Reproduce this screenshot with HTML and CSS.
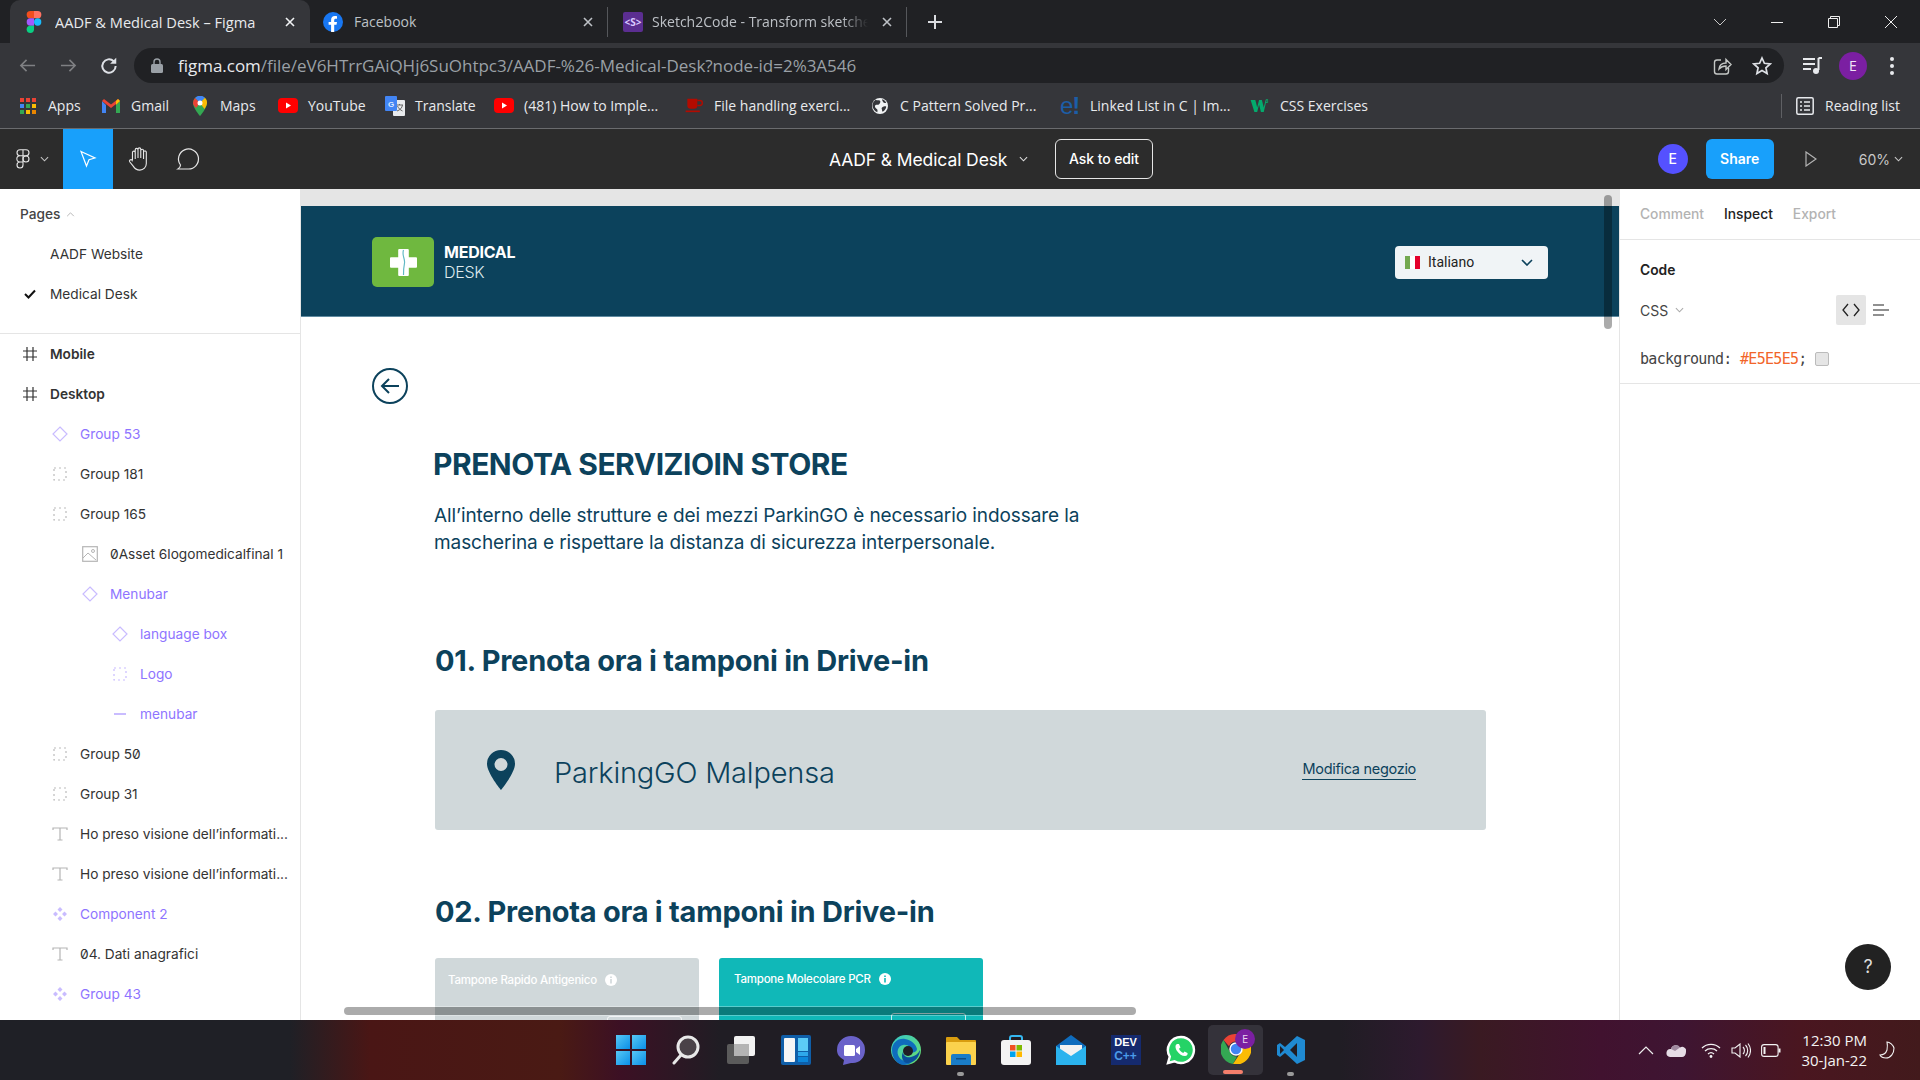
FILE: index.html
```html
<!DOCTYPE html>
<html lang="en">
<head>
<meta charset="utf-8">
<title>AADF &amp; Medical Desk – Figma</title>
<link rel="stylesheet" href="styles.css">
</head>
<body>
<svg class="defs" width="0" height="0">
  <symbol id="i-frame" viewBox="0 0 16 16"><path d="M5 1v14M11 1v14M1 5h14M1 11h14" fill="none" stroke="#333" stroke-width="1.2"/></symbol>
  <symbol id="i-diamond" viewBox="0 0 16 16"><path d="M8 1l7 7-7 7-7-7z" fill="none" stroke="#c9bcff" stroke-width="1.2"/></symbol>
  <symbol id="i-group" viewBox="0 0 14 14"><path d="M1 1h12v12H1z" fill="none" stroke="#bbb" stroke-width="1.2" stroke-dasharray="2 3"/></symbol>
  <symbol id="i-group-p" viewBox="0 0 14 14"><path d="M1 1h12v12H1z" fill="none" stroke="#c9bcff" stroke-width="1.2" stroke-dasharray="2 3"/></symbol>
  <symbol id="i-text" viewBox="0 0 16 14"><path d="M1 3V1h14v2M8 1v12M5.5 13h5" fill="none" stroke="#b5b5b5" stroke-width="1.2"/></symbol>
  <symbol id="i-comp" viewBox="0 0 16 16"><path d="M8 1l2.5 2.5L8 6 5.500 3.500zM8 10l2.500 2.500L8 15l-2.500-2.500zM3.500 5.500L6 8l-2.500 2.500L1 8zM12.500 5.500L15 8l-2.500 2.500L10 8z" fill="#c9bcff"/></symbol>
  <symbol id="i-chev" viewBox="0 0 10 6"><path d="M1 1l4 4 4-4" fill="none" stroke="currentColor" stroke-width="1.2"/></symbol>
  <symbol id="i-yt" viewBox="0 0 20 15"><rect width="20" height="15" rx="4" fill="#f00"/><path d="M8 4.500l5 3-5 3z" fill="#fff"/></symbol>
  <symbol id="i-close" viewBox="0 0 10 10"><path d="M1 1l8 8M9 1L1 9" fill="none" stroke="currentColor" stroke-width="1.6"/></symbol>
  <symbol id="i-info" viewBox="0 0 12 12"><circle cx="6" cy="6" r="6" fill="#fff"/><path d="M5.200 5h1.600v4.500H5.200zM5.200 2.500h1.600v1.500H5.200z" fill="currentColor"/></symbol>
</svg>

<header class="tabbar">
  <div class="tab tab-active">
    <svg class="tab-ico" viewBox="0 0 12 18"><path d="M6 0H3a3 3 0 000 6h3z" fill="#f24e1e"/><path d="M6 0h3a3 3 0 010 6H6z" fill="#ff7262"/><path d="M6 6H3a3 3 0 000 6h3z" fill="#a259ff"/><circle cx="9" cy="9" r="3" fill="#1abcfe"/><path d="M3 12h3v3a3 3 0 11-3-3z" fill="#0acf83"/></svg>
    <span class="tab-title tab-title-on">AADF &amp; Medical Desk – Figma</span>
    <svg class="tab-x tab-x-on"><use href="#i-close"/></svg>
  </div>
  <div class="tab tab-fb">
    <svg class="tab-ico" viewBox="0 0 20 20"><circle cx="10" cy="10" r="10" fill="#1877f2"/><path d="M13.500 12.800l.5-2.800h-2.800V8.200c0-.8.400-1.500 1.600-1.500H14V4.300s-1.100-.2-2.200-.2c-2.300 0-3.700 1.400-3.700 3.800V10H5.600v2.800h2.500V20h3.100v-7.200z" fill="#fff"/></svg>
    <span class="tab-title">Facebook</span>
    <svg class="tab-x"><use href="#i-close"/></svg>
  </div>
  <div class="tab tab-s2c">
    <div class="s2c-ico">&lt;S&gt;</div>
    <span class="tab-title tab-fade">Sketch2Code - Transform sketches</span>
    <svg class="tab-x"><use href="#i-close"/></svg>
  </div>
  <svg class="new-tab" viewBox="0 0 14 14"><path d="M7 0v14M0 7h14" stroke="#dadce0" stroke-width="2"/></svg>
  <div class="win-ctrls">
    <svg class="win-chev" viewBox="0 0 14 8"><path d="M1 1l6 6 6-6" fill="none" stroke="#c8c8c8"/></svg>
    <svg class="win-btn" viewBox="0 0 14 14"><path d="M1 7.500h12" stroke="#eee"/></svg>
    <svg class="win-btn" viewBox="0 0 14 14"><path d="M1.500 3.500h9v9h-9zM3.500 3.500v-2h9v9h-2" fill="none" stroke="#eee"/></svg>
    <svg class="win-btn" viewBox="0 0 14 14"><path d="M1 1l12 12M13 1L1 13" stroke="#eee"/></svg>
  </div>
</header>

<nav class="toolbar">
  <svg class="nav-ico" viewBox="0 0 18 16"><path d="M17 8H2M8 2L2 8l6 6" fill="none" stroke="#7f8083" stroke-width="1.700"/></svg>
  <svg class="nav-ico" viewBox="0 0 18 16"><path d="M1 8h15M10 2l6 6-6 6" fill="none" stroke="#7f8083" stroke-width="1.700"/></svg>
  <svg class="nav-ico nav-reload" viewBox="0 0 18 18"><path d="M15 9a6 6 0 11-1.800-4.300" fill="none" stroke="#dee1e6" stroke-width="1.800"/><path d="M15.500 1.500v5.500H10z" fill="#dee1e6"/></svg>
  <div class="omnibox">
    <svg class="lock" viewBox="0 0 12 15"><path d="M3 6V4a3 3 0 016 0v2" fill="none" stroke="#9aa0a6" stroke-width="1.400"/><rect y="6" width="12" height="9" rx="1.500" fill="#9aa0a6"/></svg>
    <div class="url"><span class="url-host">figma.com</span>/file/eV6HTrrGAiQHj6SuOhtpc3/AADF-%26-Medical-Desk?node-id=2%3A546</div>
    <svg class="omni-ico" viewBox="0 0 20 20"><path d="M9 4H5a2.500 2.500 0 00-2.500 2.500v9A2.500 2.500 0 005 18h9a2.500 2.500 0 002.500-2.500V12" fill="none" stroke="#c4c7c5" stroke-width="1.400"/><path d="M7 13c.5-4 3-6 7-6V3.500l5 5-5 5V10c-3 0-5 .8-7 3z" fill="none" stroke="#c4c7c5" stroke-width="1.400"/></svg>
    <svg class="omni-ico star" viewBox="0 0 20 20"><path d="M10 2l2.400 5.300 5.800.6-4.300 3.900 1.200 5.700L10 14.600l-5.100 2.900 1.200-5.700L1.800 7.900l5.800-.6z" fill="none" stroke="#dee1e6" stroke-width="1.700"/></svg>
  </div>
  <svg class="media" viewBox="0 0 20 18"><path d="M0 2h12M0 7h12M0 12h8" stroke="#e8eaed" stroke-width="1.800"/><path d="M15.500 1v12" stroke="#e8eaed" stroke-width="2"/><path d="M15.500 1H19" stroke="#e8eaed" stroke-width="2"/><circle cx="13" cy="14" r="3" fill="#e8eaed"/></svg>
  <div class="profile">E</div>
  <svg class="dots" viewBox="0 0 4 18"><circle cx="2" cy="2" r="2" fill="#e8eaed"/><circle cx="2" cy="9" r="2" fill="#e8eaed"/><circle cx="2" cy="16" r="2" fill="#e8eaed"/></svg>
</nav>

<nav class="bookmarks">
  <div class="bm bm-apps">
    <svg class="bm-ico" viewBox="0 0 16 16"><g><rect width="4" height="4" fill="#ea4335"/><rect x="6" width="4" height="4" fill="#ea4335"/><rect x="12" width="4" height="4" fill="#ea4335"/><rect y="6" width="4" height="4" fill="#4285f4"/><rect x="6" y="6" width="4" height="4" fill="#34a853"/><rect x="12" y="6" width="4" height="4" fill="#fbbc05"/><rect y="12" width="4" height="4" fill="#34a853"/><rect x="6" y="12" width="4" height="4" fill="#fbbc05"/><rect x="12" y="12" width="4" height="4" fill="#ea8600"/></g></svg>
    <span>Apps</span>
  </div>
  <div class="bm bm-gmail">
    <svg class="bm-ico-w" viewBox="0 0 18 14"><path d="M0 2v12h4V6z" fill="#4285f4"/><path d="M14 6v8h4V2z" fill="#34a853"/><path d="M0 2l9 7 9-7-2-2-7 5.500L2 0z" fill="#ea4335"/><path d="M14 2l2-2 2 2-4 4z" fill="#fbbc05"/></svg>
    <span>Gmail</span>
  </div>
  <div class="bm bm-maps">
    <svg class="bm-ico-m" viewBox="0 0 14 20"><path d="M7 0a7 7 0 017 7c0 5-7 13-7 13S0 12 0 7a7 7 0 017-7z" fill="#34a853"/><path d="M2 2a7 7 0 0110-.3L7 7z" fill="#4285f4"/><path d="M14 7c0 1.500-1 3.800-2.500 6L7 7l5-5.300A7 7 0 0114 7z" fill="#fbbc05"/><path d="M0 7a7 7 0 012-5l5 5-4 5C1 10 0 8.500 0 7z" fill="#ea4335"/><circle cx="7" cy="7" r="2.500" fill="#fff"/></svg>
    <span>Maps</span>
  </div>
  <div class="bm bm-yt">
    <svg class="bm-ico-y"><use href="#i-yt"/></svg>
    <span>YouTube</span>
  </div>
  <div class="bm bm-tr">
    <svg class="bm-ico-y bm-tall" viewBox="0 0 20 20"><rect x="8" y="4" width="12" height="16" rx="1" fill="#e8eaed"/><path d="M11 9h7M14.500 8v1M12 15c3-1 5-3 5.500-6M12.500 10c1 2.500 3 4 5 5" fill="none" stroke="#666" stroke-width="1"/><rect width="12" height="15" rx="1" fill="#4285f4"/><text x="3" y="11" class="tr-g">G</text></svg>
    <span>Translate</span>
  </div>
  <div class="bm bm-yt2">
    <svg class="bm-ico-y"><use href="#i-yt"/></svg>
    <span>(481) How to Imple...</span>
  </div>
  <div class="bm bm-file">
    <svg class="bm-ico-y" viewBox="0 0 20 18"><path d="M2 1h12v8a4 4 0 01-4 4H6a4 4 0 01-4-4z" fill="#b30b00"/><path d="M14 3h3a2 2 0 010 6h-3" fill="none" stroke="#b30b00" stroke-width="1.600"/><rect y="15" width="17" height="2" fill="#b30b00"/></svg>
    <span>File handling exerci...</span>
  </div>
  <div class="bm bm-globe">
    <svg class="bm-ico" viewBox="0 0 18 18"><circle cx="9" cy="9" r="9" fill="#f1f3f4"/><path d="M4 2c2 1 4 0 5 1s0 3-1 4-3 0-4 1-1 3 1 4 1 3 1 4c-3-1-5-4-5.500-7C.5 6 2 3.500 4 2zM12 10c1-1 3-1 4-.5 0 2-1.500 4.500-4 6-1-1-.5-2-1-3s0-2 1-2.500zM11.500 1.500c2 .5 3.500 2 4.500 4-1 .5-3 0-3.500-1s-1.500-2-1-3z" fill="#35363a"/></svg>
    <span>C Pattern Solved Pr...</span>
  </div>
  <div class="bm bm-e">
    <span class="e-ico">e<span class="e-bang">!</span></span>
    <span>Linked List in C | Im...</span>
  </div>
  <div class="bm bm-w3">
    <svg class="bm-ico-y" viewBox="0 0 20 16"><path d="M0 2h5l2 8 2-8h3l2 8 2-8h1l-3 13h-3L9 7l-2 8H4z" fill="#04aa6d"/><text x="16" y="5" class="w3-s">3</text></svg>
    <span>CSS Exercises</span>
  </div>
  <div class="bm-reading">
    <svg class="bm-read-ico" viewBox="0 0 18 18"><rect x=".8" y=".8" width="16.400" height="16.400" rx="1.500" fill="none" stroke="#e8eaed" stroke-width="1.500"/><path d="M4 5h2M8 5h6M4 9h2M8 9h6M4 13h2M8 13h6" stroke="#e8eaed" stroke-width="1.500"/></svg>
    <span>Reading list</span>
  </div>
</nav>

<div class="figbar">
  <div class="fig-left">
    <div class="fig-logo">
      <svg class="fig-mark" viewBox="0 0 14 20"><path d="M7 .7H4a3 3 0 000 6h3zM7 .7h3a3 3 0 010 6H7zM7 6.700H4a3 3 0 000 6.300h3zM4 13h3v3a3 3 0 11-3-3z" fill="none" stroke="#e6e6e6" stroke-width="1.100"/><circle cx="10" cy="10" r="3" fill="none" stroke="#e6e6e6" stroke-width="1.100"/></svg>
      <svg class="fig-chev"><use href="#i-chev"/></svg>
    </div>
    <div class="tool tool-on">
      <svg class="tool-ico" viewBox="0 0 18 18"><path d="M2 1.500l14 6.500-6 1.800L7.500 16z" fill="none" stroke="#fff" stroke-width="1.200"/></svg>
    </div>
    <div class="tool">
      <svg class="tool-ico tool-big" viewBox="0 0 24 26"><path d="M6 14V6a1.500 1.500 0 013 0V3a1.500 1.500 0 013 0V2.500a1.500 1.500 0 013 0V4a1.500 1.500 0 013 0v2a1.500 1.500 0 013-.5V18c0 4-3 7-7 7-3.500 0-5.500-1.500-7-4l-4-5c-1-1.500 1-3 2.500-2L6 15.500M9 5v8M12 3v9M15 3v9M18 5v8" fill="none" stroke="#e6e6e6" stroke-width="1.200"/></svg>
    </div>
    <div class="tool">
      <svg class="tool-ico tool-big" viewBox="0 0 24 24"><path d="M2 22c1.500-1 2.500-2.500 2.500-4A10 10 0 1112 22z" fill="none" stroke="#e6e6e6" stroke-width="1.200"/></svg>
    </div>
  </div>
  <div class="fig-title">AADF &amp; Medical Desk</div>
  <svg class="fig-title-chev"><use href="#i-chev"/></svg>
  <div class="ask">Ask to edit</div>
  <div class="fig-right">
    <div class="fig-avatar">E</div>
    <div class="share">Share</div>
    <svg class="play" viewBox="0 0 12 16"><path d="M1 1l10 7-10 7z" fill="none" stroke="#b3b3b3" stroke-width="1.200"/></svg>
    <span class="zoom-val">60%</span>
    <svg class="zoom-chev"><use href="#i-chev"/></svg>
  </div>
</div>

<main class="workspace">
  <aside class="layers">
    <div class="pages-head">Pages <svg class="pages-chev" viewBox="0 0 10 6"><path d="M1 5l4-4 4 4" fill="none" stroke="#aaa"/></svg></div>
    <div class="row d0"><span class="ri"></span><span class="rt">AADF Website</span></div>
    <div class="row d0"><span class="ri"><svg class="ck" viewBox="0 0 12 10"><path d="M1 5l3.500 3.500L11 1.500" fill="none" stroke="#111" stroke-width="2"/></svg></span><span class="rt">Medical Desk</span></div>
    <div class="divider"></div>
    <div class="row d0 bold"><span class="ri"><svg class="li16"><use href="#i-frame"/></svg></span><span class="rt">Mobile</span></div>
    <div class="row d0 bold"><span class="ri"><svg class="li16"><use href="#i-frame"/></svg></span><span class="rt">Desktop</span></div>
    <div class="row d1 pur"><span class="ri"><svg class="li16"><use href="#i-diamond"/></svg></span><span class="rt">Group 53</span></div>
    <div class="row d1"><span class="ri"><svg class="li14"><use href="#i-group"/></svg></span><span class="rt">Group 181</span></div>
    <div class="row d1"><span class="ri"><svg class="li14"><use href="#i-group"/></svg></span><span class="rt">Group 165</span></div>
    <div class="row d2"><span class="ri"><svg class="li16" viewBox="0 0 16 16"><rect x=".7" y=".7" width="14.600" height="14.600" fill="none" stroke="#b5b5b5" stroke-width="1.200"/><path d="M1 12l5-5 8 7" fill="none" stroke="#b5b5b5"/><circle cx="11" cy="5" r="1.500" fill="none" stroke="#b5b5b5"/></svg></span><span class="rt">0Asset 6logomedicalfinal 1</span></div>
    <div class="row d2 pur"><span class="ri"><svg class="li16"><use href="#i-diamond"/></svg></span><span class="rt">Menubar</span></div>
    <div class="row d3 pur"><span class="ri"><svg class="li16"><use href="#i-diamond"/></svg></span><span class="rt">language box</span></div>
    <div class="row d3 pur"><span class="ri"><svg class="li14"><use href="#i-group-p"/></svg></span><span class="rt">Logo</span></div>
    <div class="row d3 pur"><span class="ri"><span class="dash"></span></span><span class="rt">menubar</span></div>
    <div class="row d1"><span class="ri"><svg class="li14"><use href="#i-group"/></svg></span><span class="rt">Group 50</span></div>
    <div class="row d1"><span class="ri"><svg class="li14"><use href="#i-group"/></svg></span><span class="rt">Group 31</span></div>
    <div class="row d1"><span class="ri"><svg class="li16"><use href="#i-text"/></svg></span><span class="rt">Ho preso visione dell’informati...</span></div>
    <div class="row d1"><span class="ri"><svg class="li16"><use href="#i-text"/></svg></span><span class="rt">Ho preso visione dell’informati...</span></div>
    <div class="row d1 pur"><span class="ri"><svg class="li16"><use href="#i-comp"/></svg></span><span class="rt">Component 2</span></div>
    <div class="row d1"><span class="ri"><svg class="li16"><use href="#i-text"/></svg></span><span class="rt">04. Dati anagrafici</span></div>
    <div class="row d1 pur"><span class="ri"><svg class="li16"><use href="#i-comp"/></svg></span><span class="rt">Group 43</span></div>
  </aside>

  <section class="canvas">
    <div class="site-head">
      <div class="brand">
        <div class="brand-mark">
          <svg class="brand-cross" viewBox="0 0 28 28"><path d="M9.500 1h9v8.500H27v9h-8.500V27h-9v-8.500H1v-9h8.500z" fill="#fff" stroke="#fff" stroke-linejoin="round" stroke-width="2"/><path d="M14 1c-2 6 2 9 1 14s-1 8-1 12" fill="none" stroke="#5fb8c4" stroke-width="1.200"/></svg>
        </div>
        <div class="brand-text"><div class="brand-top">MEDICAL</div><div class="brand-sub">DESK</div></div>
      </div>
      <div class="lang">
        <svg class="flag" viewBox="0 0 15 13"><rect width="5" height="13" fill="#73a950"/><rect x="5" width="5" height="13" fill="#fff"/><rect x="10" width="5" height="13" fill="#e4002b"/></svg>
        <span class="lang-name">Italiano</span>
        <svg class="lang-chev" viewBox="0 0 12 7"><path d="M1 1l5 5 5-5" fill="none" stroke="#0c425c" stroke-width="1.600"/></svg>
      </div>
    </div>
    <svg class="back" viewBox="0 0 36 36"><circle cx="18" cy="18" r="17" fill="none" stroke="#0c425c" stroke-width="2"/><path d="M27 18H10M17 11l-7 7 7 7" fill="none" stroke="#0c425c" stroke-width="2"/></svg>
    <h1 class="title">PRENOTA SERVIZIOIN STORE</h1>
    <p class="lead">All’interno delle strutture e dei mezzi ParkinGO è necessario indossare la<br>mascherina e rispettare la distanza di sicurezza interpersonale.</p>
    <h2 class="step step-one">01. Prenota ora i tamponi in Drive-in</h2>
    <div class="store">
      <svg class="pin" viewBox="0 0 28 40"><path fill-rule="evenodd" d="M14 0a14 14 0 0114 14c0 9-14 26-14 26S0 23 0 14A14 14 0 0114 0zm0 8a6.500 6.500 0 100 13 6.500 6.500 0 000-13z" fill="#0c425c"/></svg>
      <div class="store-name">ParkingGO Malpensa</div>
      <a class="store-edit">Modifica negozio</a>
    </div>
    <h2 class="step step-two">02. Prenota ora i tamponi in Drive-in</h2>
    <div class="tiles">
      <div class="tile tile-off">
        <div class="tile-head"><span>Tampone Rapido Antigenico</span><svg class="info info-off"><use href="#i-info"/></svg></div>
        <div class="tile-btn"></div>
      </div>
      <div class="tile tile-on">
        <div class="tile-head"><span>Tampone Molecolare PCR</span><svg class="info info-on"><use href="#i-info"/></svg></div>
        <div class="tile-btn"></div>
      </div>
    </div>
    <div class="vbar"></div>
    <div class="hbar"></div>
  </section>

  <aside class="inspect">
    <div class="ins-tabs"><span class="ins-tab">Comment</span><span class="ins-tab ins-on">Inspect</span><span class="ins-tab">Export</span></div>
    <div class="ins-code">
      <div class="ins-h">Code</div>
      <div class="ins-lang">
        <span>CSS</span>
        <svg class="ins-chev"><use href="#i-chev"/></svg>
        <div class="ins-tool"><svg class="ins-tool-ico" viewBox="0 0 18 14"><path d="M6 1L1 7l5 6M12 1l5 6-5 6" fill="none" stroke="#222" stroke-width="1.300"/></svg></div>
        <svg class="ins-lines" viewBox="0 0 16 12"><path d="M0 1h11M0 6h16M0 11h11" stroke="#222" stroke-width="1.200"/></svg>
      </div>
      <div class="ins-css">background: <span class="ins-hex">#E5E5E5</span>;<span class="swatch"></span></div>
    </div>
    <div class="help">?</div>
  </aside>
</main>

<footer class="taskbar">
  <div class="dock">
    <div class="app"><svg class="app-ico" viewBox="0 0 30 30"><defs><linearGradient id="wn" x1="0" y1="0" x2="1" y2="1"><stop offset="0" stop-color="#57c8f5"/><stop offset="1" stop-color="#0a8fe8"/></linearGradient></defs><rect width="14" height="14" fill="url(#wn)"/><rect x="16" width="14" height="14" fill="url(#wn)"/><rect y="16" width="14" height="14" fill="url(#wn)"/><rect x="16" y="16" width="14" height="14" fill="url(#wn)"/></svg></div>
    <div class="app"><svg class="app-ico" viewBox="0 0 30 30"><circle cx="17" cy="12" r="10" fill="#4a4248" stroke="#e8e8e8" stroke-width="3"/><path d="M10 20l-7 8" stroke="#e8e8e8" stroke-width="3" stroke-linecap="round"/></svg></div>
    <div class="app"><svg class="app-ico" viewBox="0 0 30 30"><rect x="1" y="9" width="22" height="20" rx="2" fill="#5b5b5b"/><rect x="8" y="1" width="21" height="20" rx="2" fill="#f2f2f2"/><rect x="8" y="9" width="15" height="12" fill="#b4b4b4"/></svg></div>
    <div class="app"><svg class="app-ico" viewBox="0 0 30 30"><rect width="30" height="30" rx="2" fill="#0f5ea8"/><rect x="3" y="3" width="11" height="24" rx="1" fill="#f5f5f5"/><rect x="17" y="3" width="10" height="13" fill="#5ccbf7"/><rect x="17" y="17" width="10" height="4" fill="#2ea8ec"/><rect x="17" y="22" width="10" height="5" fill="#0c86da"/></svg></div>
    <div class="app"><svg class="app-ico" viewBox="0 0 30 30"><path d="M15 1a14 14 0 0114 14c0 8-6 14-14 13l-8 2 1-5C3 22 1 19 1 15A14 14 0 0115 1z" fill="#6a62c9"/><rect x="8" y="10" width="11" height="11" rx="1.500" fill="#fff"/><path d="M20 14l4-3v9l-4-3z" fill="#fff"/></svg></div>
    <div class="app"><svg class="app-ico" viewBox="0 0 30 30"><defs><linearGradient id="edg" x1="0" y1="0" x2="1" y2="1"><stop offset="0" stop-color="#37c7c9"/><stop offset="1" stop-color="#6be06a"/></linearGradient></defs><circle cx="15" cy="15" r="15" fill="url(#edg)"/><path d="M1 15C1 8 7 3 14 4c6 1 11 5 12 10 0 3-4 4-7 3 2-4-2-8-7-7-5 1-7 7-4 12 2 3 7 6 13 5-2 2-5 3-8 3C6 30 1 23 1 15z" fill="#0f6cbd"/><circle cx="17" cy="16" r="5" fill="#201d24"/><path d="M12 17c0 4 4 6 8 5s7-3 9-7c0 5-4 13-13 13-3 0-7-5-4-11z" fill="#0a4f9a"/></svg></div>
    <div class="app app-dot"><svg class="app-ico" viewBox="0 0 30 30"><path d="M0 3a1 1 0 011-1h10l3 3h15a1 1 0 011 1v5H0z" fill="#d99d0f"/><rect y="7" width="30" height="23" rx="1" fill="#fbd24d"/><path d="M5 30V21a2 2 0 012-2h16a2 2 0 012 2v9z" fill="#1a7dc8"/><rect x="10" y="23" width="10" height="1.500" fill="#0e4f85"/></svg></div>
    <div class="app"><svg class="app-ico" viewBox="0 0 30 30"><path d="M9 6V3a2 2 0 012-2h8a2 2 0 012 2v3" fill="none" stroke="#35b7f0" stroke-width="2"/><rect y="5" width="30" height="25" rx="3" fill="#f3f3f3"/><rect x="9" y="10" width="5.500" height="5.500" fill="#f25022"/><rect x="15.500" y="10" width="5.500" height="5.500" fill="#7fba00"/><rect x="9" y="16.500" width="5.500" height="5.500" fill="#00a4ef"/><rect x="15.500" y="16.500" width="5.500" height="5.500" fill="#ffb900"/></svg></div>
    <div class="app"><svg class="app-ico" viewBox="0 0 30 30"><path d="M15 0l15 11v18H0V11z" fill="#0f6cbd"/><path d="M4 10h22v5L15 22 4 15z" fill="#f2f2f2"/><path d="M0 11l15 10 15-10v19H0z" fill="#2bb3ee"/></svg></div>
    <div class="app"><div class="dev"><span class="dev-a">DEV</span><span class="dev-b">C++</span></div></div>
    <div class="app"><svg class="app-ico" viewBox="0 0 30 30"><path d="M15 2a13 13 0 11-6.500 24.300L2 28l1.800-6.300A13 13 0 0115 2z" fill="#25d366" stroke="#fff" stroke-width="2.400"/><path d="M11 9c-2 1-2 4 0 7s5 5 8 5c2 0 3-2 2.500-3l-3-1.500-1.200 1.500c-2-.8-3.500-2.300-4.300-4.300l1.500-1.200L13 9z" fill="#fff"/></svg></div>
    <div class="app app-on"><svg class="app-ico chrome" viewBox="0 0 30 30"><path d="M15 0a15 15 0 0113 7.500H15a7.500 7.500 0 00-7 4.700L2.500 6A15 15 0 0115 0z" fill="#ea4335"/><path d="M2.500 6L9 18a7.500 7.500 0 007 4.500L12 30A15 15 0 012.500 6z" fill="#34a853"/><path d="M28 7.500A15 15 0 0112 30l6-9a7.500 7.500 0 00-3-13.500z" fill="#fbbc05"/><circle cx="15" cy="15" r="6" fill="#4285f4" stroke="#fff" stroke-width="1.500"/></svg><div class="chrome-badge">E</div><div class="on-bar"></div></div>
    <div class="app app-dot"><svg class="app-ico" viewBox="0 0 30 30"><path d="M21 1l8 4v20l-8 4L9 18l-5 4-3-2V10l3-2 5 4z" fill="#1f8ad2"/><path d="M21 8l-7 7 7 7z" fill="#201d24"/><path d="M4 11v8l4-4z" fill="#201d24"/></svg></div>
  </div>
  <div class="tray">
    <svg class="tray-chev" viewBox="0 0 16 9"><path d="M1 8l7-7 7 7" fill="none" stroke="#eee" stroke-width="1.200"/></svg>
    <svg class="tray-cloud" viewBox="0 0 20 13"><path d="M5 5a5 5 0 019-1.500A4 4 0 0120 8c0 3-2 5-4 5H4a4 4 0 011-8z" fill="#e6dde6"/><path d="M5 5a5 5 0 019-1.500L9 7z" fill="#a08aa0"/></svg>
    <svg class="tray-wifi" viewBox="0 0 20 15"><path d="M1 5a13 13 0 0118 0M4 8a9 9 0 0112 0M7 11a4.500 4.500 0 016 0" fill="none" stroke="#f3f3f3" stroke-width="1.300"/><circle cx="10" cy="13.500" r="1.400" fill="#f3f3f3"/></svg>
    <svg class="tray-vol" viewBox="0 0 20 15"><path d="M1 5h3l5-4v13l-5-4H1z" fill="none" stroke="#f3f3f3" stroke-width="1.100"/><path d="M12 4a5 5 0 010 7M14.500 2a8 8 0 010 11M17 .5a11 11 0 010 14" fill="none" stroke="#f3f3f3" stroke-width="1.100"/></svg>
    <svg class="tray-bat" viewBox="0 0 20 13"><rect x=".6" y=".6" width="16.500" height="11.800" rx="2.500" fill="none" stroke="#f3f3f3" stroke-width="1.100"/><rect x="2.500" y="3" width="2" height="7" fill="#f3f3f3"/><rect x="17.500" y="4.500" width="2" height="4" fill="#f3f3f3"/></svg>
    <div class="clock"><div>12:30 PM</div><div>30-Jan-22</div></div>
    <svg class="tray-moon" viewBox="0 0 16 18"><path d="M8 1c3 0 6 3 7 6 0 5-3 10-8 10-3 0-5-1-6-3 3 0 6-2 7-5 .5-3 .5-6 0-8z" fill="none" stroke="#f3f3f3" stroke-width="1.100"/></svg>
  </div>
</footer>
</body>
</html>
```
FILE: styles.css
```css
* { box-sizing: border-box; }
html, body { margin: 0; padding: 0; }
body {
  width: 1920px;
  height: 1080px;
  overflow: hidden;
  display: flex;
  flex-direction: column;
  font-family: "Open Sans", "Liberation Sans", sans-serif;
  background: #202124;
}
.defs { position: absolute; }
svg { display: block; flex: none; }

/* browser tab strip */
.tabbar { height: 43px; background: #202124; display: flex; align-items: center; color: #bdc1c6; font-size: 14px; flex: none; }
.tab { height: 43px; display: flex; align-items: center; flex: none; }
.tab-active { width: 300px; margin-left: 10px; background: #35363a; border-radius: 10px 10px 0 0; padding: 0 0 0 14px; }
.tab-ico { width: 20px; height: 22px; margin-right: 11px; }
.tab-title { flex: 1; white-space: nowrap; overflow: hidden; }
.tab-title-on { color: #e8eaed; font-size: 14.600px; }
.tab-x { width: 10px; height: 10px; color: #bdc1c6; margin-right: 14px; }
.tab-x-on { color: #f1f3f4; margin-right: 15px; }
.tab-fb { width: 298px; padding-left: 13px; border-right: 1px solid #55575b; height: 30px; }
.tab-s2c { width: 299px; padding-left: 15px; border-right: 1px solid #55575b; height: 30px; }
.tab-s2c .tab-x { margin-left: 14px; }
.s2c-ico { width: 20px; height: 20px; margin-right: 9px; background: #5b2e91; color: #d9c8ff; border-radius: 2px; font-size: 10px; font-weight: 700; text-align: center; line-height: 20px; flex: none; }
.tab-fade { color: #bdc1c6; -webkit-mask-image: linear-gradient(90deg, #000 88%, transparent); mask-image: linear-gradient(90deg, #000 88%, transparent); }
.new-tab { width: 14px; height: 14px; margin-left: 21px; }
.win-ctrls { margin-left: auto; display: flex; align-items: center; padding-right: 22px; }
.win-chev { width: 14px; height: 8px; margin-right: 43px; }
.win-btn { width: 14px; height: 14px; margin-right: 43px; }
.win-btn:last-child { margin-right: 0; }

/* browser toolbar */
.toolbar { height: 40px; background: #35363a; display: flex; align-items: center; flex: none; padding-left: 19px; }
.nav-ico { width: 17px; height: 17px; margin-right: 24px; }
.nav-reload { width: 20px; height: 20px; margin-left: -2px; margin-right: 23px; }
.omnibox { width: 1650px; height: 35px; margin: 5px 0 0 -8px; background: #202124; border-radius: 18px; display: flex; align-items: center; padding-left: 17px; }
.toolbar > svg { margin-top: 5px; }
.lock { width: 12px; height: 15px; margin-right: 15px; }
.url { color: #9aa0a6; font-size: 17px; letter-spacing: -.02px; white-space: nowrap; width: 1534px; flex: none; }
.url-host { color: #e8eaed; }
.omni-ico { width: 20px; height: 20px; }
.omni-ico.star { margin-left: 20px; }
.toolbar > .media { width: 20px; height: 18px; margin-left: 19px; }
.profile { width: 28px; height: 28px; margin: 5px 0 0 16px; border-radius: 50%; background: #7b1fa2; color: #f1e5f7; font-size: 14px; text-align: center; line-height: 28px; }
.toolbar > .dots { width: 4px; height: 18px; margin-left: 23px; }

/* bookmarks */
.bookmarks { height: 46px; background: #35363a; border-bottom: 1px solid #6a6b6e; display: flex; align-items: center; color: #e8eaed; font-size: 14px; flex: none; padding-left: 20px; }
.bm { display: flex; align-items: center; flex: none; white-space: nowrap; }
.bm-ico { width: 16px; height: 16px; margin-right: 12px; }
.bm-ico-w { width: 18px; height: 14px; margin-right: 11px; }
.bm-ico-m { width: 14px; height: 20px; margin-right: 13px; }
.bm-ico-y { width: 20px; height: 15px; margin-right: 10px; }
.bm-tall { height: 20px; }
.tr-g { font: 700 8px "Liberation Sans", sans-serif; fill: #dce8ff; }
.w3-s { font: 700 5px "Liberation Sans", sans-serif; fill: #04aa6d; }
.e-ico { color: #1c5ea8; font-size: 24px; line-height: 20px; width: 20px; margin-right: 10px; font-family: "Liberation Sans", sans-serif; letter-spacing: -1px; }
.e-bang { font-weight: 700; }
.bm-apps { width: 82px; }
.bm-gmail { width: 91px; }
.bm-maps { width: 85px; }
.bm-yt { width: 107px; }
.bm-tr { width: 109px; }
.bm-yt2 { width: 190px; }
.bm-file { width: 188px; }
.bm-globe { width: 188px; }
.bm-e { width: 190px; }
.bm-w3 { width: 200px; }
.bm-reading { margin-left: auto; width: 139px; height: 24px; border-left: 1px solid #5f6064; display: flex; align-items: center; padding-left: 14px; white-space: nowrap; }
.bm-read-ico { width: 18px; height: 18px; margin-right: 11px; }

/* figma toolbar */
.figbar { height: 60px; background: #2c2c2c; display: flex; align-items: center; color: #fff; flex: none; position: relative; }
.fig-left { display: flex; align-items: stretch; height: 60px; width: 829px; }
.fig-logo { width: 63px; display: flex; align-items: center; padding-left: 16px; }
.fig-mark { width: 14px; height: 20px; }
.fig-chev { width: 9px; height: 6px; color: #c4c4c4; margin-left: 10px; }
.tool { width: 50px; display: flex; align-items: center; justify-content: center; }
.tool-on { background: #18a0fb; }
.tool-ico { width: 18px; height: 18px; }
.tool-big { width: 24px; height: 24px; }
.fig-title { font-family: Inter, sans-serif; font-size: 17.500px; letter-spacing: -.1px; width: 178px; white-space: nowrap; }
.fig-title-chev { width: 9px; height: 6px; color: #ddd; margin-left: 12px; }
.ask { width: 98px; height: 40px; margin-left: 27px; border: 1px solid #e6e6e6; border-radius: 6px; font-family: Inter, sans-serif; font-size: 14px; font-weight: 500; letter-spacing: -.1px; text-align: center; line-height: 38px; }
.fig-right { margin-left: auto; display: flex; align-items: center; padding-right: 17px; }
.fig-avatar { width: 30px; height: 30px; border-radius: 50%; background: #5551ff; font: 500 14px Inter, sans-serif; text-align: center; line-height: 30px; }
.share { width: 68px; height: 40px; margin-left: 18px; border-radius: 6px; background: #18a0fb; font: 600 14px Inter, sans-serif; text-align: center; line-height: 39px; }
.play { width: 12px; height: 16px; margin-left: 31px; }
.zoom-val { margin-left: 42px; font: 400 14px Inter, sans-serif; color: #c8c8c8; }
.zoom-chev { width: 9px; height: 6px; color: #c8c8c8; margin-left: 4px; }

/* workspace */
.workspace { height: 831px; display: flex; flex: none; background: #fff; overflow: hidden; }
.layers { width: 301px; flex: none; border-right: 1px solid #e5e5e5; padding-top: 5px; font-family: Inter, sans-serif; font-size: 13.700px; font-feature-settings: "zero"; color: #333; overflow: hidden; }
.pages-head { height: 40px; padding-left: 20px; display: flex; align-items: center; gap: 6px; font-weight: 500; color: #444; }
.pages-chev { width: 9px; height: 5px; }
.row { height: 40px; display: flex; align-items: center; white-space: nowrap; }
.ri { width: 40px; height: 40px; display: flex; align-items: center; justify-content: center; flex: none; }
.rt { flex: none; }
.d0 { padding-left: 10px; }
.d1 { padding-left: 40px; }
.d2 { padding-left: 70px; }
.d3 { padding-left: 100px; }
.bold { font-weight: 600; }
.pur { color: #8e74ff; }
.ck { width: 12px; height: 10px; }
.li16 { width: 16px; height: 16px; }
.li14 { width: 14px; height: 14px; }
.dash { width: 12px; height: 2px; background: #c9bcff; }
.divider { height: 1px; margin-top: 19px; background: #e5e5e5; }

/* canvas */
.canvas { width: 1318px; flex: none; position: relative; overflow: hidden; background: #fff; color: #0c425c; font-family: Inter, sans-serif; padding-top: 17px; box-shadow: inset 0 17px 0 #e5e5e5; }
.site-head { height: 111px; background: #0c425c; display: flex; align-items: center; justify-content: space-between; padding: 2px 71px 0; border-bottom: 1px solid #5f8aa0; }
.brand { display: flex; align-items: center; }
.brand-mark { width: 62px; height: 50px; background: #6fb83f; border-radius: 5px; display: flex; align-items: center; justify-content: center; }
.brand-cross { width: 27px; height: 27px; }
.brand-text { margin-left: 10px; color: #fff; line-height: 20px; }
.brand-top { font-size: 16px; font-weight: 700; letter-spacing: -.25px; }
.brand-sub { font-size: 16px; font-weight: 300; color: #dfeaee; letter-spacing: -.3px; }
.lang { width: 153px; height: 33px; background: #f0f4f6; border-radius: 4px; display: flex; align-items: center; padding-left: 10px; color: #222; font-family: Roboto, sans-serif; font-size: 14px; }
.flag { width: 15px; height: 13px; margin-right: 8px; }
.lang-chev { width: 12px; height: 7px; margin-left: auto; margin-right: 15px; }
.back { width: 36px; height: 36px; margin: 51px 0 0 71px; }
.title { margin: 40px 0 0 132px; font-size: 30px; line-height: 40px; font-weight: 700; letter-spacing: -.5px; white-space: nowrap; }
.lead { margin: 18px 0 0 133px; font-size: 19px; line-height: 27px; font-weight: 400; letter-spacing: -.08px; white-space: nowrap; }
.step { margin: 0 0 0 134px; font-size: 29px; line-height: 40px; font-weight: 700; letter-spacing: -.25px; white-space: nowrap; }
.step-one { margin-top: 85px; }
.step-two { margin-top: 62px; }
.store { width: 1051px; height: 120px; margin: 29px 0 0 134px; background: #d0d8da; border-radius: 3px; display: flex; align-items: center; padding: 0 70px 0 52px; }
.pin { width: 28px; height: 40px; margin-top: -1px; }
.store-name { margin-left: 39px; font-size: 29px; font-weight: 300; letter-spacing: -.2px; white-space: nowrap; margin-top: 5px; }
.store-edit { margin-left: auto; margin-top: -1px; font-size: 14.500px; letter-spacing: -.3px; padding-bottom: 2px; border-bottom: 1px solid #0c425c; white-space: nowrap; }
.tiles { display: flex; gap: 20px; margin: 26px 0 0 134px; }
.tile { width: 264px; height: 100px; border-radius: 3px; color: #fff; position: relative; font-size: 11.500px; font-weight: 500; letter-spacing: -.22px; }
.tile-off { background: #d0d8da; }
.tile-on { background: #10b8b8; }
.tile-head { display: flex; align-items: center; gap: 8px; height: 44px; padding-left: 13px; white-space: nowrap; }
.tile-on .tile-head { height: 42px; padding-left: 15px; }
.info { width: 12px; height: 12px; }
.info-off { color: #d0d8da; }
.info-on { color: #10b8b8; }
.tile-btn { position: absolute; width: 75px; height: 40px; border: 1px solid rgba(255,255,255,.75); border-radius: 3px; right: 17px; top: 58px; }
.tile-on .tile-btn { top: 55px; }
.vbar { position: absolute; left: 1303px; top: 6px; width: 8px; height: 134px; border-radius: 4px; background: rgba(0,0,0,.33); }
.hbar { position: absolute; left: 43px; top: 818px; width: 792px; height: 8px; border-radius: 4px; background: rgba(0,0,0,.33); box-shadow: 0 0 0 1px rgba(255,255,255,.3); }

/* inspect panel */
.inspect { width: 301px; flex: none; border-left: 1px solid #e5e5e5; font-family: Inter, sans-serif; font-size: 13.800px; position: relative; }
.ins-tabs { height: 51px; display: flex; align-items: center; padding-left: 20px; gap: 20px; border-bottom: 1px solid #e5e5e5; font-weight: 500; color: #b3b3b3; }
.ins-on { color: #222; }
.ins-code { height: 144px; border-bottom: 1px solid #e5e5e5; padding: 21px 20px 0; }
.ins-h { font-weight: 600; color: #222; line-height: 18px; }
.ins-lang { display: flex; align-items: center; height: 30px; margin-top: 16px; color: #444; font-size: 14px; }
.ins-chev { width: 9px; height: 6px; color: #aaa; margin-left: 7px; }
.ins-tool { width: 30px; height: 30px; margin-left: auto; background: #e5e5e5; border-radius: 2px; display: flex; align-items: center; justify-content: center; }
.ins-tool-ico { width: 18px; height: 14px; }
.ins-lines { width: 16px; height: 12px; margin-left: 7px; margin-right: 11px; }
.ins-css { margin-top: 25px; font-family: "DejaVu Sans Mono", monospace; font-size: 15px; color: #444; letter-spacing: -.7px; display: flex; align-items: center; white-space: pre; }
.ins-hex { color: #f2652a; }
.swatch { width: 14px; height: 14px; margin-left: 8px; background: #e5e5e5; border: 1px solid #bbb; border-radius: 2px; }
.help { position: absolute; left: 225px; top: 755px; width: 46px; height: 46px; border-radius: 50%; background: #222; color: #ddd; font-size: 18px; text-align: center; line-height: 46px; }

/* windows taskbar */
.taskbar { height: 60px; flex: none; position: relative; display: flex; align-items: center; justify-content: flex-end; background: linear-gradient(90deg, #1f2026 0, #1f2026 290px, #4a1615 370px, #4a1a14 560px, #3c1024 620px, #201d24 720px, #201d24 1340px, #2d1a2e 1420px, #3a1a22 1480px, #41122f 1600px, #3e1532 1680px, #4a1620 1800px, #421a1c 1920px); }
.dock { position: absolute; left: 603px; top: 0; height: 60px; display: flex; }
.app { width: 55px; height: 60px; display: flex; align-items: center; justify-content: center; position: relative; }
.app-ico { width: 30px; height: 30px; }
.app-dot::after { content: ""; position: absolute; left: 24px; bottom: 4px; width: 7px; height: 4px; border-radius: 2px; background: #9a9a9a; }
.app-on { background: #34323a; border-radius: 5px; height: 50px; margin-top: 5px; }
.chrome { margin-top: -2px; }
.chrome-badge { position: absolute; left: 27px; top: 4px; width: 20px; height: 20px; border-radius: 50%; background: #7b1fa2; color: #e8d6ef; font-size: 11px; text-align: center; line-height: 20px; }
.on-bar { position: absolute; left: 15px; bottom: 1px; width: 20px; height: 4px; border-radius: 2px; background: #f47f6c; }
.dev { width: 30px; height: 30px; background: #152a6e; color: #fff; font: 700 11px "Liberation Sans", sans-serif; display: flex; flex-direction: column; align-items: center; line-height: 14px; }
.dev-b { color: #4a9be8; font-size: 12px; }
.tray { display: flex; align-items: center; height: 60px; }
.tray-chev { width: 16px; height: 9px; margin-right: 12px; }
.tray-cloud { width: 20px; height: 13px; margin-right: 15px; }
.tray-wifi { width: 20px; height: 15px; margin-right: 10px; }
.tray-vol { width: 20px; height: 15px; margin-right: 10px; }
.tray-bat { width: 20px; height: 13px; }
.clock { width: 86px; text-align: right; color: #f3f3f3; font-size: 15px; line-height: 20px; font-family: "Open Sans", sans-serif; white-space: nowrap; }
.tray-moon { width: 16px; height: 18px; margin: 0 25px 0 12px; }
```
